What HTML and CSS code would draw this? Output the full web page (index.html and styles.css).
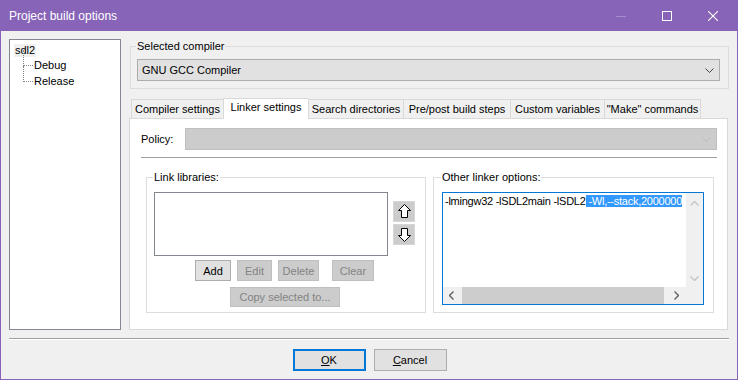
FILE: index.html
```html
<!DOCTYPE html>
<html lang="en">
<head>
  <meta charset="UTF-8">
  <title>Project build options</title>
  <link rel="stylesheet" href="styles.css">
</head>
<body>
  <div class="window">
    <div class="titlebar">
      <span class="title">Project build options</span>
      <span class="ctl ctl-min"><svg width="10" height="10" viewBox="0 0 10 10"><line x1="0" y1="5.5" x2="10" y2="5.5" stroke="#a58cce" stroke-width="1"/></svg></span>
      <span class="ctl ctl-max"><svg width="10" height="10" viewBox="0 0 10 10"><rect x="0.5" y="0.5" width="9" height="9" fill="none" stroke="#fff" stroke-width="1"/></svg></span>
      <span class="ctl ctl-close"><svg width="10" height="10" viewBox="0 0 10 10"><path d="M0 0L10 10M10 0L0 10" stroke="#fff" stroke-width="1.1"/></svg></span>
    </div>

    <div class="content">
      <div class="tree">
        <div class="node root"><span class="sel">sdl2</span></div>
        <div class="children">
          <div class="node child">Debug</div>
          <div class="node child last">Release</div>
        </div>
      </div>

      <div class="main">
        <fieldset class="group compiler-group">
          <legend>Selected compiler</legend>
          <div class="combo">
            <span>GNU GCC Compiler</span>
            <svg class="chev" width="9" height="5" viewBox="0 0 9 5"><path d="M0.5 0.5L4.5 4.5L8.5 0.5" fill="none" stroke="#444" stroke-width="1"/></svg>
          </div>
        </fieldset>

        <div class="tabs">
          <div class="tab" style="width:92px">Compiler settings</div>
          <div class="tab active" style="width:85px">Linker settings</div>
          <div class="tab" style="width:95px">Search directories</div>
          <div class="tab" style="width:107px">Pre/post build steps</div>
          <div class="tab" style="width:94px">Custom variables</div>
          <div class="tab" style="width:97px">"Make" commands</div>
        </div>

        <div class="panel">
          <div class="policy-row">
            <span class="policy-label">Policy:</span>
            <div class="combo disabled">
              <svg class="chev" width="9" height="5" viewBox="0 0 9 5"><path d="M0.5 0.5L4.5 4.5L8.5 0.5" fill="none" stroke="#bdbdbd" stroke-width="1"/></svg>
            </div>
          </div>
          <div class="hsep"></div>

          <div class="groups">
            <fieldset class="group libs">
              <legend>Link libraries:</legend>
              <div class="list-row">
                <div class="listbox"></div>
                <div class="arrows">
                  <div class="arrow-btn">
                    <svg width="13" height="15" viewBox="0 0 13 15"><path d="M6.5 0.5L12.5 6.5H9.5V13.5H3.5V6.5H0.5Z" fill="#fff" stroke="#000" stroke-width="1"/></svg>
                  </div>
                  <div class="arrow-btn">
                    <svg width="13" height="15" viewBox="0 0 13 15"><path d="M6.5 14.5L12.5 8.5H9.5V1.5H3.5V8.5H0.5Z" fill="#fff" stroke="#000" stroke-width="1"/></svg>
                  </div>
                </div>
              </div>
              <div class="btn-row">
                <button class="btn" style="width:36px">Add</button>
                <button class="btn off" style="width:35px">Edit</button>
                <button class="btn off" style="width:41px">Delete</button>
                <button class="btn off clear" style="width:42px">Clear</button>
              </div>
              <div class="btn-row copy-row">
                <button class="btn off" style="width:110px">Copy selected to...</button>
              </div>
            </fieldset>

            <fieldset class="group other">
              <legend>Other linker options:</legend>
              <div class="textbox">
                <div class="text">-lmingw32 -lSDL2main -lSDL2<span class="hl"> -Wl,--stack,2000000</span></div>
                <div class="vscroll">
                  <svg width="9" height="5" viewBox="0 0 9 5"><path d="M0.5 4.5L4.5 0.5L8.5 4.5" fill="none" stroke="#c2c2c2" stroke-width="1.2"/></svg>
                  <svg width="9" height="5" viewBox="0 0 9 5"><path d="M0.5 0.5L4.5 4.5L8.5 0.5" fill="none" stroke="#c2c2c2" stroke-width="1.2"/></svg>
                </div>
                <div class="hscroll">
                  <svg width="5" height="9" viewBox="0 0 5 9"><path d="M4.5 0.5L0.5 4.5L4.5 8.5" fill="none" stroke="#606060" stroke-width="1.4"/></svg>
                  <div class="thumb"></div>
                  <svg width="5" height="9" viewBox="0 0 5 9"><path d="M0.5 0.5L4.5 4.5L0.5 8.5" fill="none" stroke="#606060" stroke-width="1.4"/></svg>
                </div>
                <div class="corner"></div>
              </div>
            </fieldset>
          </div>
        </div>
      </div>
    </div>

    <div class="footer-sep"></div>
    <div class="footer">
      <button class="btn big default"><u>O</u>K</button>
      <button class="btn big"><u>C</u>ancel</button>
    </div>
  </div>
</body>
</html>
```

FILE: styles.css
```css
body {
    margin: 0;
    background: #f0f0f0;
    font-family: "Liberation Sans", Arial, sans-serif;
    font-size: 11px;
    color: #000;
}

.window {
    width: 738px;
    height: 380px;
    box-sizing: border-box;
    border: 1px solid #8764b8;
    border-top: none;
    background: #f0f0f0;
    display: flex;
    flex-direction: column;
}

.titlebar {
    height: 31px;
    background: #8764b8;
    display: flex;
    align-items: center;
    color: #fff;
    flex-shrink: 0;
}

.title {
    font-size: 12px;
    margin-left: 8px;
    flex: 1;
}

.ctl {
    width: 46px;
    height: 31px;
    display: flex;
    align-items: center;
    justify-content: center;
}

.ctl-close { margin-right: 1px; }

.content {
    display: flex;
    padding: 8px 0 0 8px;
    gap: 8px;
}

/* tree on the left */
.tree {
    width: 112px;
    height: 291px;
    box-sizing: border-box;
    border: 1px solid #828790;
    background: #fff;
    padding: 4px 0 0 4px;
}

.node {
    height: 16px;
    line-height: 16px;
    white-space: nowrap;
}

.root {
    height: 13px;
    line-height: 13px;
}

.sel {
    background: #f0f0f0;
    padding: 0 1px;
    display: inline-block;
    height: 13px;
    line-height: 13px;
}

.children {
    margin-left: 9px;
}

.child {
    position: relative;
    padding-left: 11px;
}

.child::before {
    content: "";
    position: absolute;
    left: 0;
    top: -7px;
    height: 16px;
    border-left: 1px dotted #808080;
}

.child::after {
    content: "";
    position: absolute;
    left: 0;
    top: 8px;
    width: 10px;
    border-top: 1px dotted #808080;
}

.main {
    width: 600px;
}

/* group boxes */
.group {
    margin: 0;
    padding: 0;
    border: 1px solid #dcdcdc;
    min-width: 0;
}

.group legend {
    padding: 0 1px;
    margin-left: -1px;
    height: 12px;
    line-height: 12px;
}

.compiler-group {
    margin: 1px 0 0 1px;
    padding: 7px 8px 7px 6px;
}

.combo {
    height: 22px;
    box-sizing: border-box;
    border: 1px solid #adadad;
    background: #e1e1e1;
    display: flex;
    align-items: center;
    justify-content: space-between;
    padding: 0 5px 0 4px;
}

.combo.disabled {
    flex: 1;
    background: #cccccc;
    border-color: #bfbfbf;
    justify-content: flex-end;
}

/* tabs */
.tabs {
    display: flex;
    align-items: flex-end;
    margin: 9px 0 0 2px;
    height: 20px;
    position: relative;
    z-index: 1;
}

.tab {
    height: 19px;
    box-sizing: border-box;
    border: 1px solid #d9d9d9;
    border-bottom: none;
    border-right: none;
    background: #f0f0f0;
    text-align: center;
    line-height: 19px;
    white-space: nowrap;
}

.tab:last-child {
    border-right: 1px solid #d9d9d9;
}

.tab.active {
    height: 21px;
    margin-bottom: -1px;
    background: #fff;
    line-height: 17px;
}

.panel {
    width: 599px;
    height: 212px;
    box-sizing: border-box;
    border: 1px solid #d9d9d9;
    background: #fff;
    padding: 9px 10px 0 11px;
}

.policy-row {
    display: flex;
    align-items: center;
    gap: 12px;
    height: 22px;
}

.hsep {
    margin: 7px 0 0 0;
    border-top: 1px solid #a0a0a0;
    width: 576px;
}

.groups {
    display: flex;
    gap: 7px;
    margin: 13px 2px 0 5px;
}

.libs {
    width: 280px;
    height: 142px;
    box-sizing: border-box;
    padding: 9px 0 0 7px;
}

.other {
    width: 281px;
    height: 142px;
    box-sizing: border-box;
    padding: 9px 0 0 8px;
}

.list-row {
    display: flex;
    gap: 5px;
}

.listbox {
    width: 234px;
    height: 64px;
    box-sizing: border-box;
    border: 1px solid #828790;
    background: #fff;
}

.arrows {
    margin-top: 9px;
    display: flex;
    flex-direction: column;
    gap: 2px;
}

.arrow-btn {
    width: 22px;
    height: 21px;
    box-sizing: border-box;
    background: #cccccc;
    border: 1px solid #d6d6d6;
    display: flex;
    align-items: center;
    justify-content: center;
}

.btn {
    font-family: inherit;
    font-size: 11px;
    height: 21px;
    box-sizing: border-box;
    border: 1px solid #adadad;
    background: #e1e1e1;
    color: #000;
    padding: 0;
    margin: 0;
}

.btn.off {
    background: #cccccc;
    border-color: #bfbfbf;
    color: #838383;
}

.btn-row {
    display: flex;
    gap: 6px;
    margin: 4px 0 0 41px;
}

.btn-row .clear {
    margin-left: 7px;
}

.copy-row {
    margin: 6px 0 0 76px;
}

.copy-row .btn {
    height: 20px;
}

/* text box with scrollbars */
.textbox {
    width: 262px;
    height: 113px;
    box-sizing: border-box;
    border: 1px solid #0078d7;
    display: grid;
    grid-template-columns: 1fr 17px;
    grid-template-rows: 1fr 17px;
    background: #fff;
}

.text {
    padding: 1px 0 0 2px;
    line-height: 14px;
    letter-spacing: -0.25px;
    white-space: nowrap;
    overflow: hidden;
}

.hl {
    background: #3399ff;
    color: #fff;
}

.vscroll {
    background: #f0f0f0;
    display: flex;
    flex-direction: column;
    justify-content: space-between;
    align-items: center;
    padding: 8px 0 6px;
}

.hscroll {
    background: #f0f0f0;
    display: flex;
    align-items: center;
    padding: 0 6px 0 6px;
}

.thumb {
    height: 17px;
    width: 202px;
    background: #cdcdcd;
    margin: 0 10px 0 8px;
}

.corner {
    background: #f0f0f0;
}

/* bottom buttons */
.footer-sep {
    margin: 8px 8px 0 8px;
    border-top: 1px solid #a0a0a0;
    border-bottom: 1px solid #fff;
}

.footer {
    display: flex;
    justify-content: center;
    gap: 8px;
    margin-top: 9px;
    padding-left: 1px;
}

.btn.big {
    width: 73px;
    height: 22px;
}

.btn.default {
    border: 2px solid #0078d7;
}
```
